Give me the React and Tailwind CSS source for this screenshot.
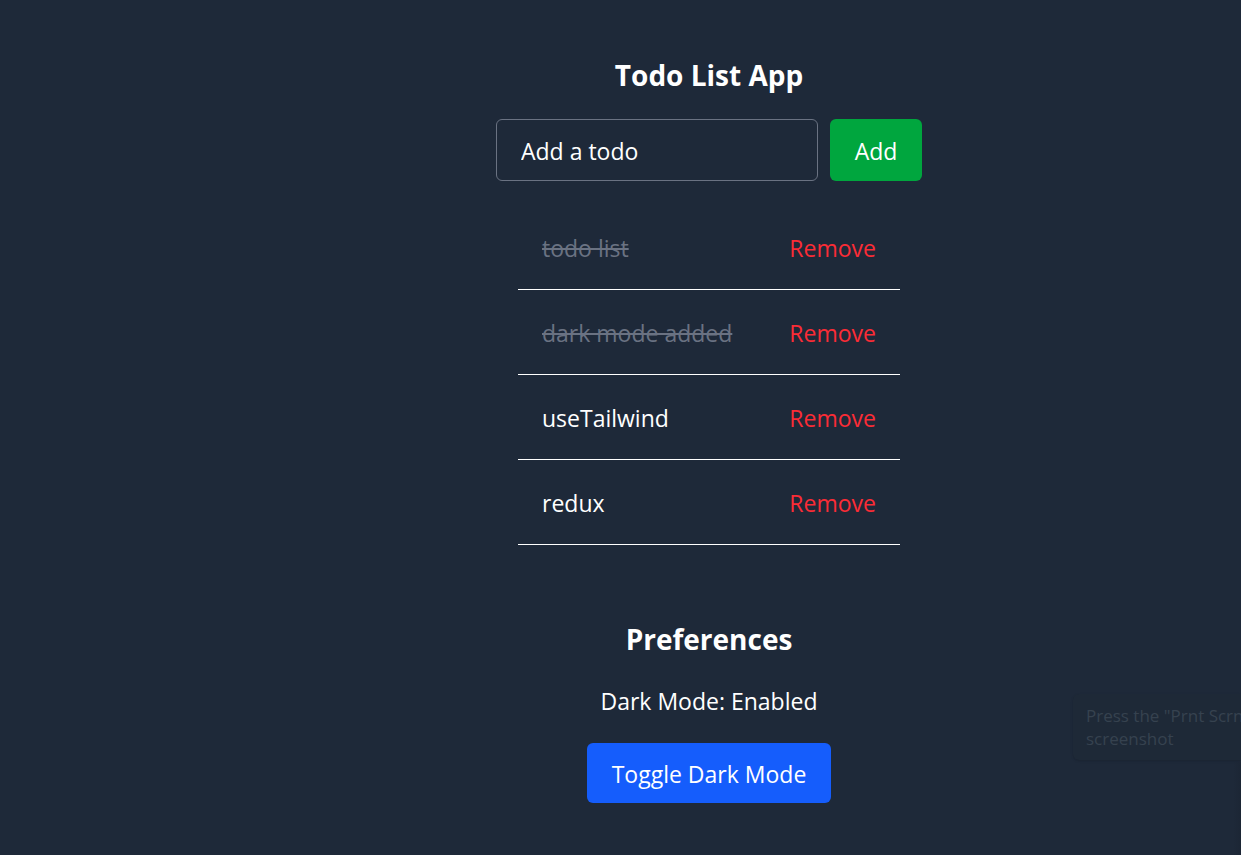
import { useState } from "react";

const initialTodos = [
  { id: 1, text: "todo list", done: true },
  { id: 2, text: "dark mode added", done: true },
  { id: 3, text: "useTailwind", done: false },
  { id: 4, text: "redux", done: false },
];

function TodoItem({ todo, onToggle, onRemove }) {
  return (
    <li className="flex items-center justify-between border-b border-white px-6 pt-[25px] pb-[23px]">
      <button
        type="button"
        onClick={() => onToggle(todo.id)}
        className={todo.done ? "text-gray-500 line-through" : "text-white"}
      >
        {todo.text}
      </button>
      <button type="button" onClick={() => onRemove(todo.id)} className="text-[#fb2c36]">
        Remove
      </button>
    </li>
  );
}

function ScreenshotHint() {
  return (
    <>
      <div className="absolute top-[694px] right-0 left-[1073px] overflow-hidden rounded-l-md bg-[#1e2937] py-[10px] pl-[13px] text-[17px]/[23px] whitespace-nowrap text-[#36424f] shadow-sm">
        Press the "Prnt Scrn
        <br />
        screenshot
      </div>
      <div className="absolute top-[762px] right-0 bottom-0 w-2 bg-linear-to-r from-transparent to-[#1c2635]" />
    </>
  );
}

export default function App() {
  const [todos, setTodos] = useState(initialTodos);
  const [draft, setDraft] = useState("");
  const [dark, setDark] = useState(true);

  const add = (e) => {
    e.preventDefault();
    if (!draft.trim()) return;
    setTodos([...todos, { id: Date.now(), text: draft.trim(), done: false }]);
    setDraft("");
  };
  const toggle = (id) => setTodos(todos.map((t) => (t.id === id ? { ...t, done: !t.done } : t)));
  const remove = (id) => setTodos(todos.filter((t) => t.id !== id));

  return (
    <div className="relative min-h-screen overflow-hidden bg-[#1e2939] font-['Open_Sans','Noto_Sans',sans-serif] text-[23px]/9 text-white">
      <main className="ml-[177px] flex flex-col items-center pt-[55px]">
        <h1 className="text-[28px]/10 font-bold">Todo List App</h1>
        <form onSubmit={add} className="mt-6 flex gap-3">
          <input
            aria-label="Add a todo"
            placeholder="Add a todo"
            value={draft}
            onChange={(e) => setDraft(e.target.value)}
            className="w-[322px] rounded-md border border-gray-500 px-6 pt-[13px] pb-[11px] placeholder:text-white"
          />
          <button type="submit" className="min-w-[92px] rounded-md bg-[#00a63e] px-6 pt-[13px] pb-[11px]">
            Add
          </button>
        </form>
        <ul className="mt-6 w-[382px]">
          {todos.map((t) => (
            <TodoItem key={t.id} todo={t} onToggle={toggle} onRemove={remove} />
          ))}
        </ul>
        <section className="mt-[74px] flex flex-col items-center">
          <h2 className="text-[28px]/10 font-bold">Preferences</h2>
          <p className="mt-6">Dark Mode: {dark ? "Enabled" : "Disabled"}</p>
          <button
            type="button"
            onClick={() => setDark(!dark)}
            className="mt-6 min-w-[244px] rounded-md bg-[#155dfc] px-6 pt-[13px] pb-[11px]"
          >
            Toggle Dark Mode
          </button>
        </section>
      </main>
      <ScreenshotHint />
    </div>
  );
}
